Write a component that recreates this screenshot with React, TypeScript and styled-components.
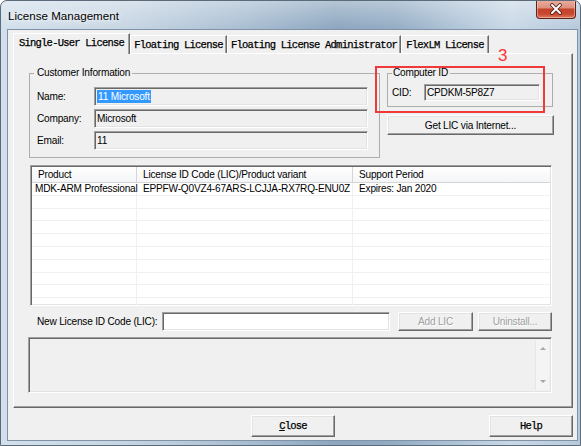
import React from "react";
import styled, { createGlobalStyle, css } from "styled-components";

const UI_FONT = `"Liberation Sans", Arial, sans-serif`;
const MONO_FONT = `"Liberation Mono", "Courier New", monospace`;

const GlobalStyle = createGlobalStyle`
  html, body { margin: 0; padding: 0; background: #ffffff; }
  body { font-family: ${UI_FONT}; }
  *, *::before, *::after { box-sizing: border-box; }
`;

const raised = css`
  border: 1px solid;
  border-color: #ffffff #696969 #696969 #ffffff;
  box-shadow: inset -1px -1px 0 #a0a0a0, inset 1px 1px 0 #e3e3e3;
`;

const sunken = css`
  border: 1px solid;
  border-color: #a0a0a0 #ffffff #ffffff #a0a0a0;
  box-shadow: inset 1px 1px 0 #696969, inset -1px -1px 0 #e3e3e3;
`;

const uiText = css`
  font-family: ${UI_FONT};
  font-size: 10.1px;
  letter-spacing: -0.2px;
  color: #000;
`;

const monoText = css`
  font-family: ${MONO_FONT};
  font-size: 10.5px;
  letter-spacing: -0.77px;
  color: #000;
  -webkit-text-stroke: 0.25px #000;
`;

const Window = styled.div`
  position: relative;
  width: 581px;
  height: 446px;
  display: flex;
  flex-direction: column;
  border: 1px solid #5c6b7a;
  border-radius: 7px 7px 0 0;
  overflow: hidden;
  background:
    linear-gradient(to bottom, rgba(255, 255, 255, 0.35) 0px, rgba(255, 255, 255, 0) 28px),
    linear-gradient(
      90deg,
      #d3e0ec 0%,
      #c6d5e3 22%,
      #a9bed2 42%,
      #8ca6bf 58%,
      #93acc4 68%,
      #b3c7da 80%,
      #c9d8e6 88%,
      #b6c9dc 100%
    );
`;

const TitleBar = styled.div`
  height: 28px;
  flex: none;
  display: flex;
  align-items: center;
  justify-content: space-between;
  padding-left: 7px;
`;

const TitleText = styled.div`
  font-family: ${UI_FONT};
  font-size: 11.6px;
  color: #000;
  text-shadow: 0 0 8px #ffffff, 0 0 4px rgba(255, 255, 255, 0.9);
`;

const CloseBox = styled.div`
  align-self: flex-start;
  width: 40px;
  height: 19px;
  margin-right: 4px;
  margin-top: -1px;
  border: 1px solid #5e2218;
  border-top: none;
  border-radius: 0 0 4px 4px;
  background: linear-gradient(
    to bottom,
    #eab0a2 0%,
    #de917f 42%,
    #c3452c 52%,
    #c9482e 78%,
    #de7c62 100%
  );
  box-shadow: inset 0 0 0 1px rgba(255, 220, 210, 0.45);
  display: flex;
  align-items: center;
  justify-content: center;
`;

const Client = styled.div`
  flex: none;
  margin: 0 2px 0 6px;
  width: 571px;
  height: 412px;
  border: 1px solid #7f92a6;
  background: #f0f0f0;
  display: flex;
  flex-direction: column;
`;

const TabStrip = styled.div`
  position: relative;
  z-index: 2;
  display: flex;
  align-items: flex-end;
  height: 20px;
  margin: 3px 0 0 5px;
`;

const Tab = styled.div<{ $active?: boolean; $w: number }>`
  ${monoText};
  width: ${(p) => p.$w}px;
  height: ${(p) => (p.$active ? 21 : 18)}px;
  margin-bottom: ${(p) => (p.$active ? -1 : 0)}px;
  display: flex;
  align-items: center;
  justify-content: center;
  padding-bottom: ${(p) => (p.$active ? 2 : 0)}px;
  background: #f0f0f0;
  border-top: 1px solid #ffffff;
  border-left: 1px solid #ffffff;
  border-right: 1px solid #696969;
  box-shadow: inset -1px 0 0 #a0a0a0;
  white-space: nowrap;
`;

const TabPage = styled.div`
  margin-left: 5px;
  width: 560px;
  height: 355px;
  flex: none;
  ${raised};
  box-shadow: inset -1px -1px 0 #a0a0a0;
  padding: 13px 0 0 15px;
  display: flex;
  flex-direction: column;
`;

const TopRow = styled.div`
  display: flex;
  align-items: flex-start;
  gap: 7px;
  height: 91px;
`;

const GroupBox = styled.fieldset<{ $w: number; $pad: string }>`
  margin: 0;
  min-width: 0;
  width: ${(p) => p.$w}px;
  padding: ${(p) => p.$pad};
  border: 1px solid #adadad;
`;

const Legend = styled.legend<{ $indent: number }>`
  ${uiText};
  line-height: 12px;
  padding: 0 2px 0 ${(p) => p.$indent}px;
`;

const FieldGrid = styled.div<{ $label: number; $field: number; $row: number; $indent: number }>`
  display: grid;
  grid-template-columns: ${(p) => p.$label}px ${(p) => p.$field}px;
  grid-auto-rows: ${(p) => p.$row}px;
  row-gap: 3px;
  padding-left: ${(p) => p.$indent}px;
  align-items: center;
`;

const FieldLabel = styled.div`
  ${uiText};
  white-space: nowrap;
`;

const Field = styled.div<{ $white?: boolean }>`
  ${sunken};
  ${uiText};
  height: 100%;
  background: ${(p) => (p.$white ? "#ffffff" : "#f0f0f0")};
  display: flex;
  align-items: center;
  padding-left: 2px;
  white-space: nowrap;
  overflow: hidden;
`;

const Selected = styled.span`
  background: #3399ff;
  color: #ffffff;
  padding: 0 1px;
  line-height: 13px;
`;

const RightColumn = styled.div`
  display: flex;
  flex-direction: column;
  gap: 8px;
`;

const PushButton = styled.div<{ $w: number; $h: number; $disabled?: boolean; $gap?: number }>`
  ${raised};
  ${uiText};
  width: ${(p) => p.$w}px;
  height: ${(p) => p.$h}px;
  margin-left: ${(p) => p.$gap ?? 0}px;
  flex: none;
  background: #f0f0f0;
  display: flex;
  align-items: center;
  justify-content: center;
  white-space: nowrap;
  color: ${(p) => (p.$disabled ? "#a0a0a0" : "#000")};
  text-shadow: ${(p) => (p.$disabled ? "1px 1px 0 #ffffff" : "none")};
`;

const ListView = styled.div`
  ${sunken};
  margin: 7px 0 0 1px;
  width: 522px;
  height: 141px;
  flex: none;
  padding: 1px;
  background: #ffffff;
  overflow: hidden;
`;

const columns = "105px 216px 199px";

const ListHeader = styled.div`
  display: grid;
  grid-template-columns: ${columns};
  height: 16px;
  background: linear-gradient(to bottom, #ffffff, #f4f5f7);
  border-bottom: 1px solid #d5d5d5;
`;

const HeaderCell = styled.div<{ $pad: number }>`
  ${uiText};
  padding-left: ${(p) => p.$pad}px;
  border-right: 1px solid #d5d5d5;
  display: flex;
  align-items: center;
  white-space: nowrap;
  overflow: hidden;
`;

const ListRow = styled.div`
  display: grid;
  grid-template-columns: ${columns};
  height: 12.8px;
  border-bottom: 1px solid #f0f0f0;
`;

const Cell = styled.div<{ $pad: number }>`
  ${uiText};
  line-height: 12px;
  padding-left: ${(p) => p.$pad}px;
  border-right: 1px solid #f0f0f0;
  white-space: nowrap;
`;

const LicRow = styled.div`
  display: flex;
  align-items: center;
  height: 19px;
  margin-top: 6px;
  padding-left: 8px;
`;

const LicLabel = styled.div`
  ${uiText};
  width: 125px;
  flex: none;
  white-space: nowrap;
`;

const LicInput = styled(Field)`
  width: 228px;
  flex: none;
  margin-right: 8px;
`;

const MessageBox = styled.div`
  ${sunken};
  margin: 6px 0 0 -1px;
  width: 524px;
  height: 56px;
  flex: none;
  background: #f0f0f0;
  display: flex;
  justify-content: flex-end;
  padding: 2px;
`;

const ScrollBar = styled.div`
  width: 14px;
  display: flex;
  flex-direction: column;
  justify-content: space-between;
  background: #f4f4f4;
  border-left: 1px solid #e6e6e6;
`;

const ScrollArrow = styled.div<{ $down?: boolean }>`
  height: 17px;
  display: flex;
  align-items: center;
  justify-content: center;
  &::after {
    content: "";
    width: 0;
    height: 0;
    border-left: 3px solid transparent;
    border-right: 3px solid transparent;
    ${(p) =>
      p.$down
        ? "border-top: 3px solid #a8a8a8;"
        : "border-bottom: 3px solid #a8a8a8;"}
  }
`;

const BottomBar = styled.div`
  margin: 7px 0 0 5px;
  width: 560px;
  height: 22px;
  display: grid;
  grid-template-columns: 1fr 84px 1fr;
`;

const MonoButton = styled.div<{ $col: number }>`
  ${raised};
  ${monoText};
  grid-column: ${(p) => p.$col};
  justify-self: ${(p) => (p.$col === 3 ? "end" : "stretch")};
  width: 84px;
  height: 22px;
  background: #f0f0f0;
  display: flex;
  align-items: center;
  justify-content: center;
`;

const AnnotationBox = styled.div`
  position: absolute;
  left: 374px;
  top: 65px;
  width: 170px;
  height: 47px;
  border: 2px solid #f03a3a;
  pointer-events: none;
`;

const AnnotationNumber = styled.div`
  position: absolute;
  left: 497px;
  top: 46px;
  font-family: ${UI_FONT};
  font-size: 17px;
  line-height: 17px;
  color: #ff3434;
`;

const tabs = [
  { label: "Single-User License", w: 117, active: true },
  { label: "Floating License", w: 97 },
  { label: "Floating License Administrator", w: 174 },
  { label: "FlexLM License", w: 88 },
];

const rows = [
  ["MDK-ARM Professional", "EPPFW-Q0VZ4-67ARS-LCJJA-RX7RQ-ENU0Z", "Expires: Jan 2020"],
  ["", "", ""],
  ["", "", ""],
  ["", "", ""],
  ["", "", ""],
  ["", "", ""],
  ["", "", ""],
  ["", "", ""],
  ["", "", ""],
  ["", "", ""],
];

export default function App() {
  return (
    <>
      <GlobalStyle />
      <Window>
        <TitleBar>
          <TitleText>License Management</TitleText>
          <CloseBox>
            <svg width="14" height="12" viewBox="0 0 14 12">
              <path d="M3 2 L11 10 M11 2 L3 10" stroke="#4a1a12" strokeWidth="3.6" strokeLinecap="round" />
              <path d="M3 2 L11 10 M11 2 L3 10" stroke="#ffffff" strokeWidth="2" strokeLinecap="round" />
            </svg>
          </CloseBox>
        </TitleBar>
        <Client>
          <TabStrip>
            {tabs.map((t) => (
              <Tab key={t.label} $active={t.active} $w={t.w}>
                {t.label}
              </Tab>
            ))}
          </TabStrip>
          <TabPage>
            <TopRow>
              <GroupBox $w={351} $pad="8px 11px 7px 4px">
                <Legend $indent={3}>Customer Information</Legend>
                <FieldGrid $label={57} $field={274} $row={19} $indent={3}>
                  <FieldLabel>Name:</FieldLabel>
                  <Field>
                    <Selected>11 Microsoft</Selected>
                  </Field>
                  <FieldLabel>Company:</FieldLabel>
                  <Field>Microsoft</Field>
                  <FieldLabel>Email:</FieldLabel>
                  <Field>11</Field>
                </FieldGrid>
              </GroupBox>
              <RightColumn>
                <GroupBox $w={166} $pad="5px 12px 5px 4px">
                  <Legend $indent={1}>Computer ID</Legend>
                  <FieldGrid $label={32} $field={116} $row={17} $indent={0}>
                    <FieldLabel>CID:</FieldLabel>
                    <Field>CPDKM-5P8Z7</Field>
                  </FieldGrid>
                </GroupBox>
                <PushButton $w={167} $h={20}>
                  Get LIC via Internet...
                </PushButton>
              </RightColumn>
            </TopRow>
            <ListView>
              <ListHeader>
                <HeaderCell $pad={6}>Product</HeaderCell>
                <HeaderCell $pad={6}>License ID Code (LIC)/Product variant</HeaderCell>
                <HeaderCell $pad={6}>Support Period</HeaderCell>
              </ListHeader>
              {rows.map((r, i) => (
                <ListRow key={i}>
                  <Cell $pad={3}>{r[0]}</Cell>
                  <Cell $pad={6}>{r[1]}</Cell>
                  <Cell $pad={6}>{r[2]}</Cell>
                </ListRow>
              ))}
            </ListView>
            <LicRow>
              <LicLabel>New License ID Code (LIC):</LicLabel>
              <LicInput $white />
              <PushButton $w={75} $h={19} $disabled>
                Add LIC
              </PushButton>
              <PushButton $w={74} $h={19} $disabled $gap={5}>
                Uninstall...
              </PushButton>
            </LicRow>
            <MessageBox>
              <ScrollBar>
                <ScrollArrow />
                <ScrollArrow $down />
              </ScrollBar>
            </MessageBox>
          </TabPage>
          <BottomBar>
            <MonoButton $col={2}>
              <u>C</u>lose
            </MonoButton>
            <MonoButton $col={3}>Help</MonoButton>
          </BottomBar>
        </Client>
        <AnnotationBox />
        <AnnotationNumber>3</AnnotationNumber>
      </Window>
    </>
  );
}
